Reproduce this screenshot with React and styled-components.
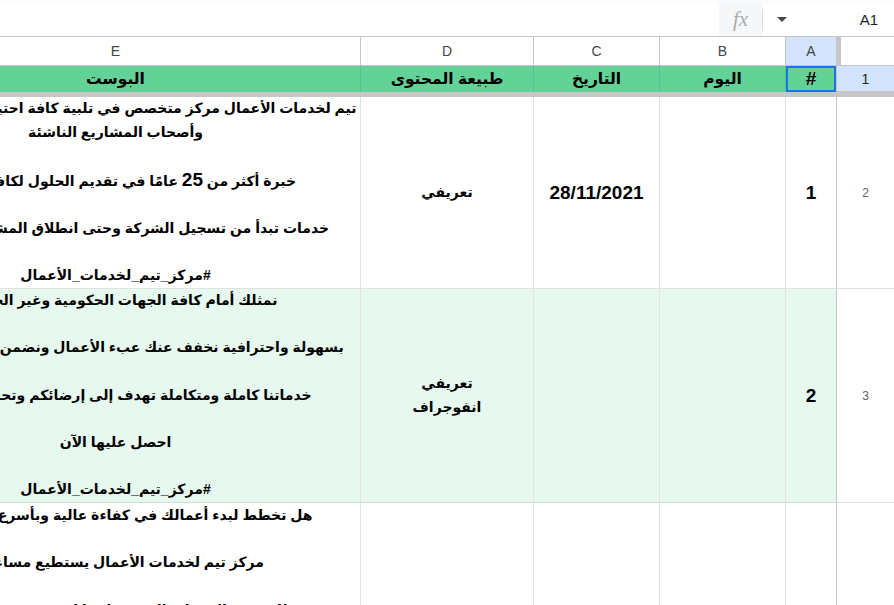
import styled, { createGlobalStyle } from "styled-components";

const GlobalStyle = createGlobalStyle`
  html, body {
    margin: 0;
    padding: 0;
    background: #ffffff;
    overflow: hidden;
  }
  body {
    font-family: "Liberation Sans", "DejaVu Sans", Arial, sans-serif;
  }
`;

const Page = styled.div`
  width: 894px;
  height: 605px;
  overflow: hidden;
  background: #ffffff;
`;

// formula bar on top
const Toolbar = styled.div`
  direction: rtl;
  display: flex;
  align-items: stretch;
  height: 33px;
  border-top: 3px solid #f9fbfd;
  border-bottom: 1px solid #c4c7c5;
`;

const NameBox = styled.div`
  width: 100px;
  display: flex;
  align-items: center;
  padding-right: 16px;
  box-sizing: border-box;
  font-size: 15px;
  color: #1f1f1f;
`;

const Arrow = styled.div`
  width: 31px;
  display: flex;
  align-items: center;
  padding-right: 7px;
  box-sizing: border-box;
`;

const Divider = styled.div`
  width: 1px;
  margin: 6px 0 5px;
  background: #dadce0;
`;

const FxBox = styled.div`
  width: 43px;
  display: flex;
  align-items: center;
  justify-content: center;
  background: #f6f7f8;
  color: #a8abaf;
  font-family: "Liberation Serif", "DejaVu Serif", serif;
  font-style: italic;
  font-size: 21px;
`;

const Formula = styled.div`
  flex: 1;
`;

const Sheet = styled.div`
  direction: rtl;
  display: grid;
  grid-template-columns: 58px 51px 126px 126px 173px 490px;
  grid-template-rows: 29px 26px 5px 192px 214px 300px;
  font-family: "Liberation Sans", "DejaVu Sans", Arial, sans-serif;
`;

const Corner = styled.div`
  background: #ffffff;
  border-left: 5px solid #c4c7c5;
  border-bottom: 1px solid #c4c7c5;
`;

const ColHead = styled.div`
  display: flex;
  align-items: center;
  justify-content: center;
  background: ${(p) => (p.$active ? "#d3e3fd" : "#ffffff")};
  border-left: 1px solid #c4c7c5;
  border-bottom: 1px solid #c4c7c5;
  color: #444746;
  font-family: "Liberation Sans", Arial, sans-serif;
  font-size: 14px;
`;

const RowHead = styled.div`
  display: flex;
  align-items: center;
  justify-content: center;
  background: ${(p) => (p.$active ? "#d3e3fd" : "#ffffff")};
  border-left: 1px solid #c4c7c5;
  border-bottom: 1px solid ${(p) => (p.$active ? "#c4c7c5" : "#e1e1e1")};
  color: ${(p) => (p.$active ? "#1f1f1f" : "#5f6368")};
  font-family: "Liberation Sans", Arial, sans-serif;
  font-size: ${(p) => (p.$active ? "14px" : "12px")};
`;

const FreezeBar = styled.div`
  grid-column: 1 / -1;
  background: #c7c7c7;
`;

const HeadCell = styled.div`
  display: flex;
  align-items: center;
  justify-content: center;
  background: #63d297;
  border-left: 1px solid #54c389;
  box-shadow: ${(p) => (p.$selected ? "inset 0 0 0 2px #1a73e8" : "none")};
  color: #000000;
  font-weight: bold;
  font-size: ${(p) => (p.$latin ? "19px" : "15.5px")};
  white-space: nowrap;
  overflow: hidden;
`;

const Cell = styled.div`
  display: flex;
  flex-direction: column;
  align-items: center;
  justify-content: ${(p) => (p.$top ? "flex-start" : "center")};
  padding-top: ${(p) => (p.$top ? "1px" : "0")};
  background: ${(p) => (p.$alt ? "#e7f9ef" : "#ffffff")};
  border-left: 1px solid #e1e1e1;
  border-bottom: 1px solid ${(p) => (p.$alt ? "#cde0d5" : "#e1e1e1")};
  color: #000000;
  font-weight: bold;
  font-size: ${(p) => (p.$big ? "19px" : "14px")};
  line-height: 23.7px;
  min-width: 0;
  box-sizing: border-box;
`;

const Line = styled.div`
  white-space: pre;
  text-align: center;
  min-height: 23.7px;
`;

const Num = styled.span`
  font-size: 19px;
`;

const posts = [
  [
    "تيم لخدمات الأعمال مركز متخصص في تلبية كافة احتياجات رواد الأعمال",
    "وأصحاب المشاريع الناشئة",
    "",
    <>
      خبرة أكثر من <Num>25</Num> عامًا في تقديم الحلول لكافة الجهات
    </>,
    "",
    "خدمات تبدأ من تسجيل الشركة وحتى انطلاق المشروع بنجاح تام",
    "",
    "#مركز_تيم_لخدمات_الأعمال",
  ],
  [
    "نمثلك أمام كافة الجهات الحكومية وغير الحكومية",
    "",
    "بسهولة واحترافية نخفف عنك عبء الأعمال ونضمن لك الجودة التامة",
    "",
    "خدماتنا كاملة ومتكاملة تهدف إلى إرضائكم وتحقيق أهدافك",
    "",
    "احصل عليها الآن",
    "",
    "#مركز_تيم_لخدمات_الأعمال",
  ],
  [
    "هل تخطط لبدء أعمالك في كفاءة عالية وبأسرع وقت ممكن",
    "",
    "مركز تيم لخدمات الأعمال يستطيع مساعدتك",
    "",
    "نقدم لك جميع الخدمات التي تحتاجها لبدء مشروعك بكل سهولة",
    "",
  ],
];

const rows = [
  { n: 2, id: "1", day: "", date: "28/11/2021", kind: ["تعريفي"], post: posts[0] },
  { n: 3, id: "2", day: "", date: "", kind: ["تعريفي", "انفوجراف"], post: posts[1], alt: true },
  { n: 4, id: "", day: "", date: "", kind: [], post: posts[2], top: true },
];

const Triangle = () => (
  <svg width="10" height="5" viewBox="0 0 10 5">
    <path d="M0 0h10L5 5z" fill="#444746" />
  </svg>
);

export default function App() {
  return (
    <Page>
      <GlobalStyle />
      <Toolbar>
        <NameBox>A1</NameBox>
        <Arrow>
          <Triangle />
        </Arrow>
        <Divider />
        <FxBox>fx</FxBox>
        <Formula />
      </Toolbar>
      <Sheet>
        <Corner />
        <ColHead $active>A</ColHead>
        <ColHead>B</ColHead>
        <ColHead>C</ColHead>
        <ColHead>D</ColHead>
        <ColHead>E</ColHead>

        <RowHead $active>1</RowHead>
        <HeadCell $selected $latin>#</HeadCell>
        <HeadCell>اليوم</HeadCell>
        <HeadCell>التاريخ</HeadCell>
        <HeadCell>طبيعة المحتوى</HeadCell>
        <HeadCell>البوست</HeadCell>

        <FreezeBar />

        {rows.map((r) => (
          <>
            <RowHead key={`h${r.n}`}>{r.n}</RowHead>
            <Cell $alt={r.alt} $big>{r.id}</Cell>
            <Cell $alt={r.alt}>{r.day}</Cell>
            <Cell $alt={r.alt} $big>{r.date}</Cell>
            <Cell $alt={r.alt}>
              {r.kind.map((k) => (
                <Line key={k}>{k}</Line>
              ))}
            </Cell>
            <Cell $alt={r.alt} $top={r.top}>
              {r.post.map((l, i) => (
                <Line key={i}>{l}</Line>
              ))}
            </Cell>
          </>
        ))}
      </Sheet>
    </Page>
  );
}
